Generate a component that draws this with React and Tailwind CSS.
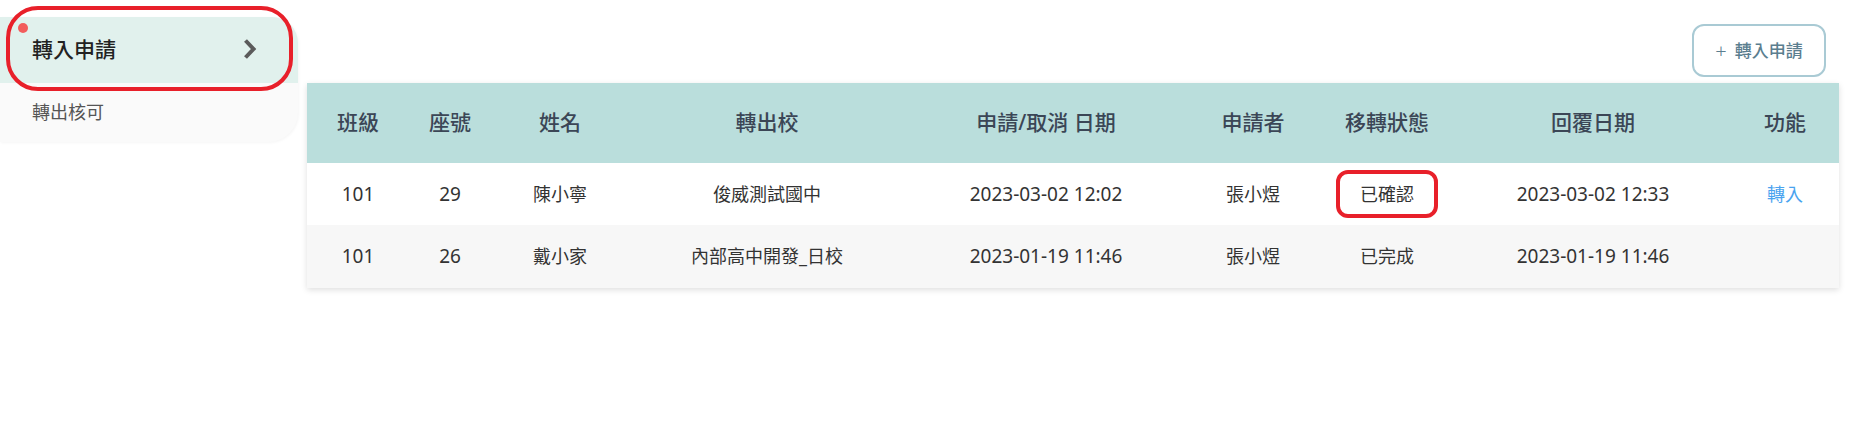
const cols = 'grid grid-cols-[102px_82px_138px_276px_282px_132px_136px_276px_108px]';

const headers = ['班級', '座號', '姓名', '轉出校', '申請/取消 日期', '申請者', '移轉狀態', '回覆日期', '功能'];

const rows = [
  { cls: '101', seat: '29', name: '陳小寧', school: '俊威測試國中', applied: '2023-03-02 12:02', by: '張小煜', status: '已確認', reply: '2023-03-02 12:33', action: '轉入', mark: true },
  { cls: '101', seat: '26', name: '戴小家', school: '內部高中開發_日校', applied: '2023-01-19 11:46', by: '張小煜', status: '已完成', reply: '2023-01-19 11:46' },
];

function Sidebar() {
  return (
    <aside className="relative w-[298px] mt-[17px] self-start bg-[#fafafa] rounded-tr-[26px] rounded-br-[30px] shadow-[1px_1px_3px_rgba(0,0,0,0.04)]">
      <div className="h-[66px] bg-[#e1f1ed] rounded-tr-[26px] flex items-center justify-between pl-8 pr-[40px]">
        <span className="text-[21px] font-medium text-[#222]">轉入申請</span>
        <svg width="16" height="24" viewBox="0 0 16 24" fill="none" className="mt-[-2px]">
          <path d="M3.5 3.5 L11.5 12 L3.5 20.5" stroke="#5b5b5b" strokeWidth="4" strokeLinecap="butt" strokeLinejoin="miter" />
        </svg>
      </div>
      <div className="h-[59px] flex items-center pl-8 text-[18px] text-[#555]">轉出核可</div>
      <span className="absolute top-[6px] left-[18px] w-[10px] h-[10px] rounded-full bg-[#f25c5c]" />
      <div className="absolute top-[-11px] left-[6px] w-[287px] h-[85px] border-4 border-[#e8202a] rounded-[32px] pointer-events-none" />
    </aside>
  );
}

export default function App() {
  return (
    <div className="min-h-[423px] bg-white flex font-['Noto_Sans','Noto_Sans_CJK_TC',sans-serif]">
      <Sidebar />
      <main className="ml-[9px] w-[1532px] flex flex-col">
        <div className="flex justify-end pt-[24px] pr-[13px]">
          <button className="w-[134px] h-[53px] border-2 border-[#a9cad4] rounded-[12px] flex items-center justify-center gap-[8px] text-[#5b7e8f]">
            <span className="text-[20px] font-light leading-none mt-[1px]">+</span>
            <span className="text-[17px] font-medium">轉入申請</span>
          </button>
        </div>
        <div className="mt-[6px] shadow-[0_2px_6px_rgba(0,0,0,0.13)]">
          <div className={`${cols} h-[80px] bg-[#badedc] items-center text-center`}>
            {headers.map((h) => (
              <div key={h} className="text-[21px] font-medium text-[#3b4656]">{h}</div>
            ))}
          </div>
          {rows.map((r, i) => (
            <div
              key={i}
              className={`${cols} ${i === 0 ? 'h-[62px] bg-white' : 'h-[63px] bg-[#f7f7f7]'} items-center text-center text-[18px] text-[#333]`}
            >
              <div className="text-[19px]">{r.cls}</div>
              <div className="text-[19px]">{r.seat}</div>
              <div>{r.name}</div>
              <div>{r.school}</div>
              <div className="text-[19px]">{r.applied}</div>
              <div>{r.by}</div>
              <div className="flex justify-center">
                {r.mark ? (
                  <span className="w-[102px] h-[48px] flex items-center justify-center border-4 border-[#e8202a] rounded-[12px]">{r.status}</span>
                ) : (
                  <span>{r.status}</span>
                )}
              </div>
              <div className="text-[19px]">{r.reply}</div>
              <div className="text-[#4aa3ef]">{r.action}</div>
            </div>
          ))}
        </div>
      </main>
    </div>
  );
}
